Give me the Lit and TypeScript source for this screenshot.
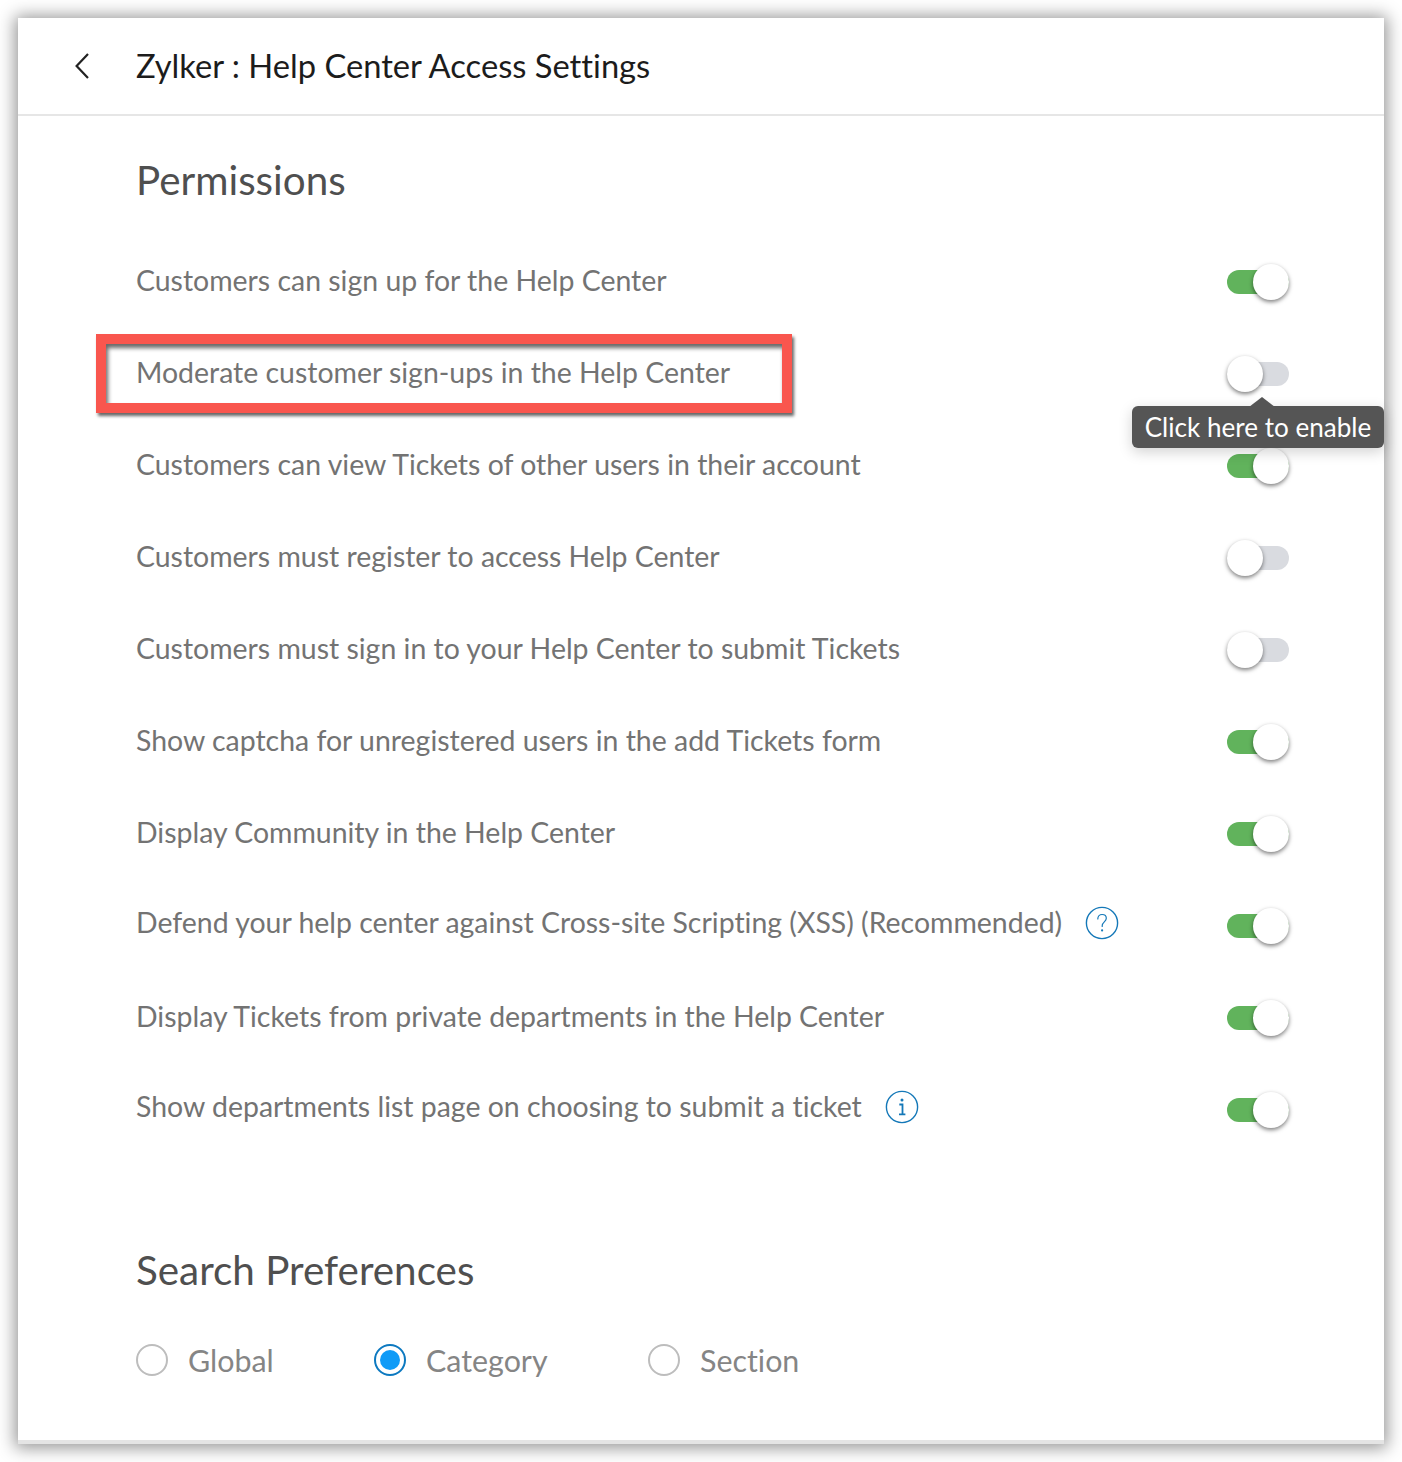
import { LitElement, html, css, svg } from "lit";
import { customElement } from "lit/decorators.js";

const rows: { t: string; on: boolean; icon?: "q" | "i"; textUp?: boolean }[] = [
  { t: "Customers can sign up for the Help Center", on: true },
  { t: "Moderate customer sign-ups in the Help Center", on: false },
  { t: "Customers can view Tickets of other users in their account", on: true },
  { t: "Customers must register to access Help Center", on: false },
  { t: "Customers must sign in to your Help Center to submit Tickets", on: false },
  { t: "Show captcha for unregistered users in the add Tickets form", on: true },
  { t: "Display Community in the Help Center", on: true },
  { t: "Defend your help center against Cross-site Scripting (XSS) (Recommended)", on: true, icon: "q", textUp: true },
  { t: "Display Tickets from private departments in the Help Center", on: true },
  { t: "Show departments list page on choosing to submit a ticket", on: true, icon: "i", textUp: true },
];

@customElement("app-root")
export class AppRoot extends LitElement {
  static styles = css`
    :host { display: block; width: 1402px; height: 1462px; background: #fff; font-family: Lato, sans-serif; font-variant-ligatures: none; box-sizing: border-box; padding: 18px; overflow: hidden; position: relative; }
    .card { position: relative; width: 1366px; height: 1426px; background: #fff; box-sizing: border-box; border-bottom: 4px solid #e4e4e4; box-shadow: 0 1px 16px 3px rgba(0,0,0,.42); display: flex; flex-direction: column; }
    .head { height: 96px; border-bottom: 2px solid #e6e6e6; display: flex; align-items: center; flex: none; }
    .back { width: 118px; display: flex; justify-content: flex-end; padding-right: 46px; box-sizing: border-box; }
    .back svg { display: block; }
    h1 { margin: 0; font-size: 32.7px; font-weight: 400; color: #1c1c1c; line-height: 40px; }
    .body { padding: 0 95px 0 118px; flex: 1; }
    h2 { margin: 0; font-size: 40.4px; font-weight: 400; color: #4f4f4f; line-height: 50px; }
    .perm { margin-top: 39px; }
    .list { margin-top: 30px; }
    .row { height: 92px; display: flex; align-items: center; justify-content: space-between; }
    .left { display: flex; align-items: center; }
    .label { font-size: 28.45px; color: #737373; line-height: 36px; transform: translateY(-1px); }
    .up { transform: translateY(-2px); }
    .ic { margin-left: 23px; display: block; }
    .toggle { position: relative; width: 62px; height: 24px; border-radius: 12px; background: #d9dbe0; flex: none; transform: translateY(1px); }
    .toggle.on { background: #61b35c; }
    .knob { position: absolute; top: -6px; left: 0; width: 36px; height: 36px; border-radius: 50%; background: #fff; box-shadow: 0 2px 4px rgba(0,0,0,.5); }
    .on .knob { left: 26px; }
    .search { margin-top: 90px; }
    .radios { display: flex; align-items: center; margin-top: 45px; height: 40px; }
    .radio { display: flex; align-items: center; }
    .circle { width: 32px; height: 32px; border-radius: 50%; box-sizing: border-box; border: 2px solid #bdbdbd; margin-right: 20px; display: flex; align-items: center; justify-content: center; }
    .circle.sel { border-color: #0d79c0; }
    .dot { width: 20px; height: 20px; border-radius: 50%; background: #0f9bf7; }
    .rl { font-size: 30.4px; color: #858585; line-height: 40px; }
    .w1 { width: 238px; }
    .w2 { width: 274px; }
    .mark { position: absolute; left: 78px; top: 316px; width: 696px; height: 79px; box-sizing: border-box; border: 10px solid #f9564e; box-shadow: 2px 3px 3px rgba(0,0,0,.6), inset 2px 4px 4px rgba(0,0,0,.6); }
    .tip { position: absolute; left: 1114px; top: 388px; width: 252px; height: 42px; box-sizing: border-box; background: #555; border-radius: 6px; color: #fff; font-size: 26.1px; line-height: 42px; text-align: center; box-shadow: 0 4px 14px rgba(0,0,0,.18); }
    .arrow { position: absolute; left: 117px; top: -9px; display: block; }
  `;

  icon(kind: "q" | "i") {
    return html`<svg class="ic" width="34" height="34" viewBox="0 0 34 34" fill="none">
      <circle cx="17" cy="17" r="15.6" stroke="#1478b8" stroke-width="1.4"></circle>
      ${kind === "q"
        ? svg`<path d="M12.8 13c0-2.8 1.9-4.5 4.3-4.5s4.2 1.5 4.2 3.8c0 3.4-4.1 3.7-4.1 7.4v.8" stroke="#1478b8" stroke-width="1.2" stroke-linecap="round"></path><circle cx="17.1" cy="24.4" r="1.1" fill="#1478b8"></circle>`
        : svg`<circle cx="17" cy="10" r="1.5" fill="#1478b8"></circle><path d="M14.3 14.5h3.2V24M14 24.4h6.4" stroke="#1478b8" stroke-width="1.8"></path>`}
    </svg>`;
  }

  render() {
    return html`<div class="card">
      <div class="head">
        <div class="back"><svg width="16" height="28" viewBox="0 0 16 28" fill="none"><path d="M14 2 2.6 14 14 26" stroke="#222" stroke-width="2.2"></path></svg></div>
        <h1>Zylker : Help Center Access Settings</h1>
      </div>
      <div class="body">
        <h2 class="perm">Permissions</h2>
        <div class="list">
          ${rows.map((r) => html`<div class="row">
            <div class="left ${r.textUp ? "up" : ""}"><span class="label">${r.t}</span>${r.icon ? this.icon(r.icon) : ""}</div>
            <div class="toggle ${r.on ? "on" : ""}"><div class="knob"></div></div>
          </div>`)}
        </div>
        <h2 class="search">Search Preferences</h2>
        <div class="radios">
          <div class="radio w1"><span class="circle"></span><span class="rl">Global</span></div>
          <div class="radio w2"><span class="circle sel"><span class="dot"></span></span><span class="rl">Category</span></div>
          <div class="radio"><span class="circle"></span><span class="rl">Section</span></div>
        </div>
      </div>
      <div class="mark"></div>
      <div class="tip"><svg class="arrow" width="26" height="10" viewBox="0 0 26 10"><path d="M0 10 13 0l13 10z" fill="#555"></path></svg>Click here to enable</div>
    </div>`;
  }
}
